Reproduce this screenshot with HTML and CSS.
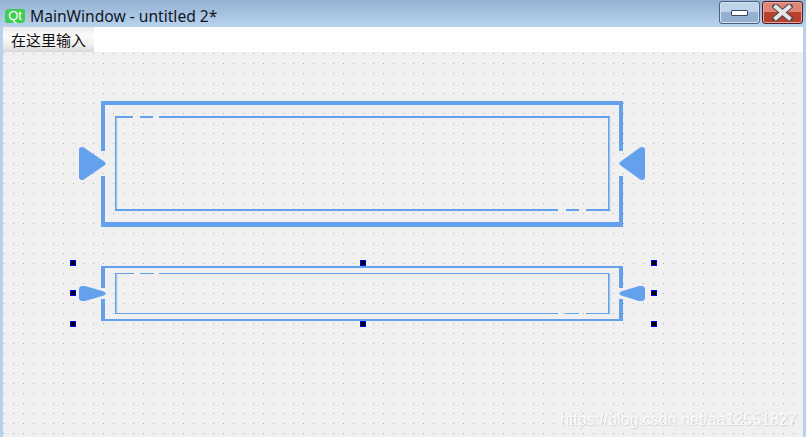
FILE: index.html
```html
<!DOCTYPE html>
<html lang="en">
<head>
    <meta charset="UTF-8">
    <meta name="viewport" content="width=device-width, initial-scale=1.0">
    <title>MainWindow - untitled 2*</title>
    <link rel="stylesheet" href="styles.css">
</head>
<body>
    <div class="window">
        <div class="titlebar">
            <span class="qt-logo">Qt</span>
            <span class="title">MainWindow - untitled 2*</span>
            <div class="controls">
                <div class="btn-min"><span class="min-bar"></span></div>
                <div class="btn-close">
                    <svg class="close-x" width="21" height="17" viewBox="0 0 21 17">
                        <path d="M3.5 2.5 L17.5 14.5 M17.5 2.5 L3.5 14.5" stroke="#4a4a58" stroke-width="6" stroke-linecap="square" fill="none"/>
                        <path d="M4 3 L17 14 M17 3 L4 14" stroke="#e6e6e6" stroke-width="4" stroke-linecap="square" fill="none"/>
                    </svg>
                </div>
            </div>
        </div>
        <div class="menubar">
            <div class="menu-item">在这里输入</div>
        </div>
        <div class="canvas">
            <!-- the two custom widgets, drawn in window coordinates -->
            <svg class="widgets" width="800" height="385" viewBox="3 52 800 385">
                <g class="line">
                    <path class="pale" d="M117 117 V209 M610 118 V212 M117 274 V313 M610 274 V315"/>
                    <path class="w4" d="M103 151 V101 M103 176 V227 M621 151 V101 M621 176 V227"/>
                    <path class="w4" d="M101 103 H623"/>
                    <path class="w5" d="M101 224.5 H623"/>
                    <path class="w15" d="M115.75 116 V211 M608.75 116 V211"/>
                    <path class="w2" d="M115 117 H133 M140 117 H153 M159 117 H610 M115 210 H558 M566 210 H579 M586 210 H610"/>

                    <path class="w4" d="M103 288 V266 M103 299 V321 M621 288 V266 M621 299 V321"/>
                    <path class="w2" d="M101 267 H623 M101 320 H623"/>
                    <path class="w15" d="M115.75 273 V314 M608.75 273 V314"/>
                    <path class="w1" d="M115 273.5 H134 M140 273.5 H154 M159 273.5 H609 M115 313.5 H558 M565 313.5 H579 M586 313.5 H609"/>
                </g>
                <g class="arrow">
                    <path d="M79 150 Q79 147 82 147 Q84 147 86 149 L105 162 Q106.5 163.5 105 165 L86 178 Q84 180 82 180 Q79 180 79 177 Z"/>
                    <path d="M645 150 Q645 147 642 147 Q640 147 638 149 L620 162 Q618.5 163.5 620 165 L638 178 Q640 180 642 180 Q645 180 645 177 Z"/>
                    <path d="M79 288 L81 286 L85 286 L104 291.5 L106 293.5 L104 295.5 L85 301 L81 301 L79 299 Z"/>
                    <path d="M645 288 L643 286 L639 286 L621 291.5 L619 293.5 L621 295.5 L639 301 L643 301 L645 299 Z"/>
                </g>
            </svg>

            <!-- selection handles -->
            <span class="handle h-left h-top"></span>
            <span class="handle h-mid h-top"></span>
            <span class="handle h-right h-top"></span>
            <span class="handle h-left h-center"></span>
            <span class="handle h-right h-center"></span>
            <span class="handle h-left h-bottom"></span>
            <span class="handle h-mid h-bottom"></span>
            <span class="handle h-right h-bottom"></span>

            <div class="watermark">https://blog.csdn.net/aa12551827</div>
        </div>
    </div>
</body>
</html>
```

FILE: styles.css
```css
html, body {
    margin: 0;
    padding: 0;
}
body {
    width: 806px;
    height: 437px;
    overflow: hidden;
    font-family: "Open Sans", "Noto Sans CJK SC", sans-serif;
}
.window {
    display: flex;
    flex-direction: column;
    height: 437px;
    background: #b9d2ec;
}
.titlebar {
    display: flex;
    align-items: flex-start;
    height: 27px;
    padding-left: 5px;
    padding-right: 3px;
    background: linear-gradient(#93b1d1, #b9d3ee);
}
.qt-logo {
    width: 20px;
    height: 14px;
    margin-top: 9px;
    line-height: 14px;
    text-align: center;
    color: white;
    font-family: "Liberation Sans", sans-serif;
    font-size: 13px;
    background: #41cd52;
    border-radius: 4px 2px 4px 2px;
}
.title {
    margin-top: 5px;
    margin-left: 5px;
    color: #10161e;
    font-family: "Noto Sans", sans-serif;
    font-size: 15.6px;
}
.controls {
    display: flex;
    gap: 2px;
    margin-left: auto;
    padding-top: 1px;
}
.btn-min, .btn-close {
    display: flex;
    align-items: center;
    justify-content: center;
    box-sizing: border-box;
    height: 23px;
    border-radius: 3px;
}
.btn-min {
    width: 41px;
    border: 1px solid #4d5f7e;
    box-shadow: inset 0 0 0 1px #d3e2f2;
    background: linear-gradient(#bfd3ea 50%, #94b1d1 50%);
}
.min-bar {
    width: 17px;
    height: 6px;
    box-sizing: border-box;
    background: white;
    border: 1px solid #3c4760;
    border-radius: 1px;
}
.btn-close {
    width: 41px;
    border: 1px solid #4a1a2a;
    box-shadow: inset 0 0 0 1px #e6a79c;
    background: linear-gradient(#df8577 50%, #b8412b 50%);
}
.menubar {
    height: 25px;
    margin: 0 3px;
    background: white;
}
.menu-item {
    width: 91px;
    height: 25px;
    box-sizing: border-box;
    padding-left: 8px;
    line-height: 26px;
    color: #111;
    font-family: "Noto Sans CJK SC", sans-serif;
    font-size: 15px;
    background: linear-gradient(#ececec, #fafafa 35%, #f0f0f0 70%, #d8d8d8);
}
.canvas {
    position: relative;
    flex: 1;
    margin: 0 3px;
    background-color: #f0f0f0;
    background-image: conic-gradient(at 1px 1px, transparent 75%, #b0b0b0 0);
    background-size: 10px 10px;
    background-position: 0 1px;
}
.widgets {
    position: absolute;
    left: 0;
    top: 0;
}
.line path {
    fill: none;
    stroke: #64a1ec;
}
.line .pale {
    stroke: #c4d9f3;
    stroke-width: 1;
}
.line .w5 { stroke-width: 5; }
.line .w4 { stroke-width: 4; }
.line .w2 { stroke-width: 2; }
.line .w15 { stroke-width: 1.5; }
.line .w1 { stroke-width: 1; }
.arrow path {
    fill: #64a1ec;
}
.handle {
    position: absolute;
    width: 4px;
    height: 4px;
    background: black;
    border: 1px solid #0000e6;
}
.h-left { left: 67px; }
.h-mid { left: 357px; }
.h-right { left: 648px; }
.h-top { top: 208px; }
.h-center { top: 238px; }
.h-bottom { top: 269px; }
.watermark {
    position: absolute;
    left: 557px;
    top: 359px;
    color: rgba(255, 255, 255, 0.85);
    font-family: "Liberation Sans", sans-serif;
    font-size: 16px;
    white-space: nowrap;
    text-shadow: 1px 1px 1px rgba(160, 160, 160, 0.35);
}
```
